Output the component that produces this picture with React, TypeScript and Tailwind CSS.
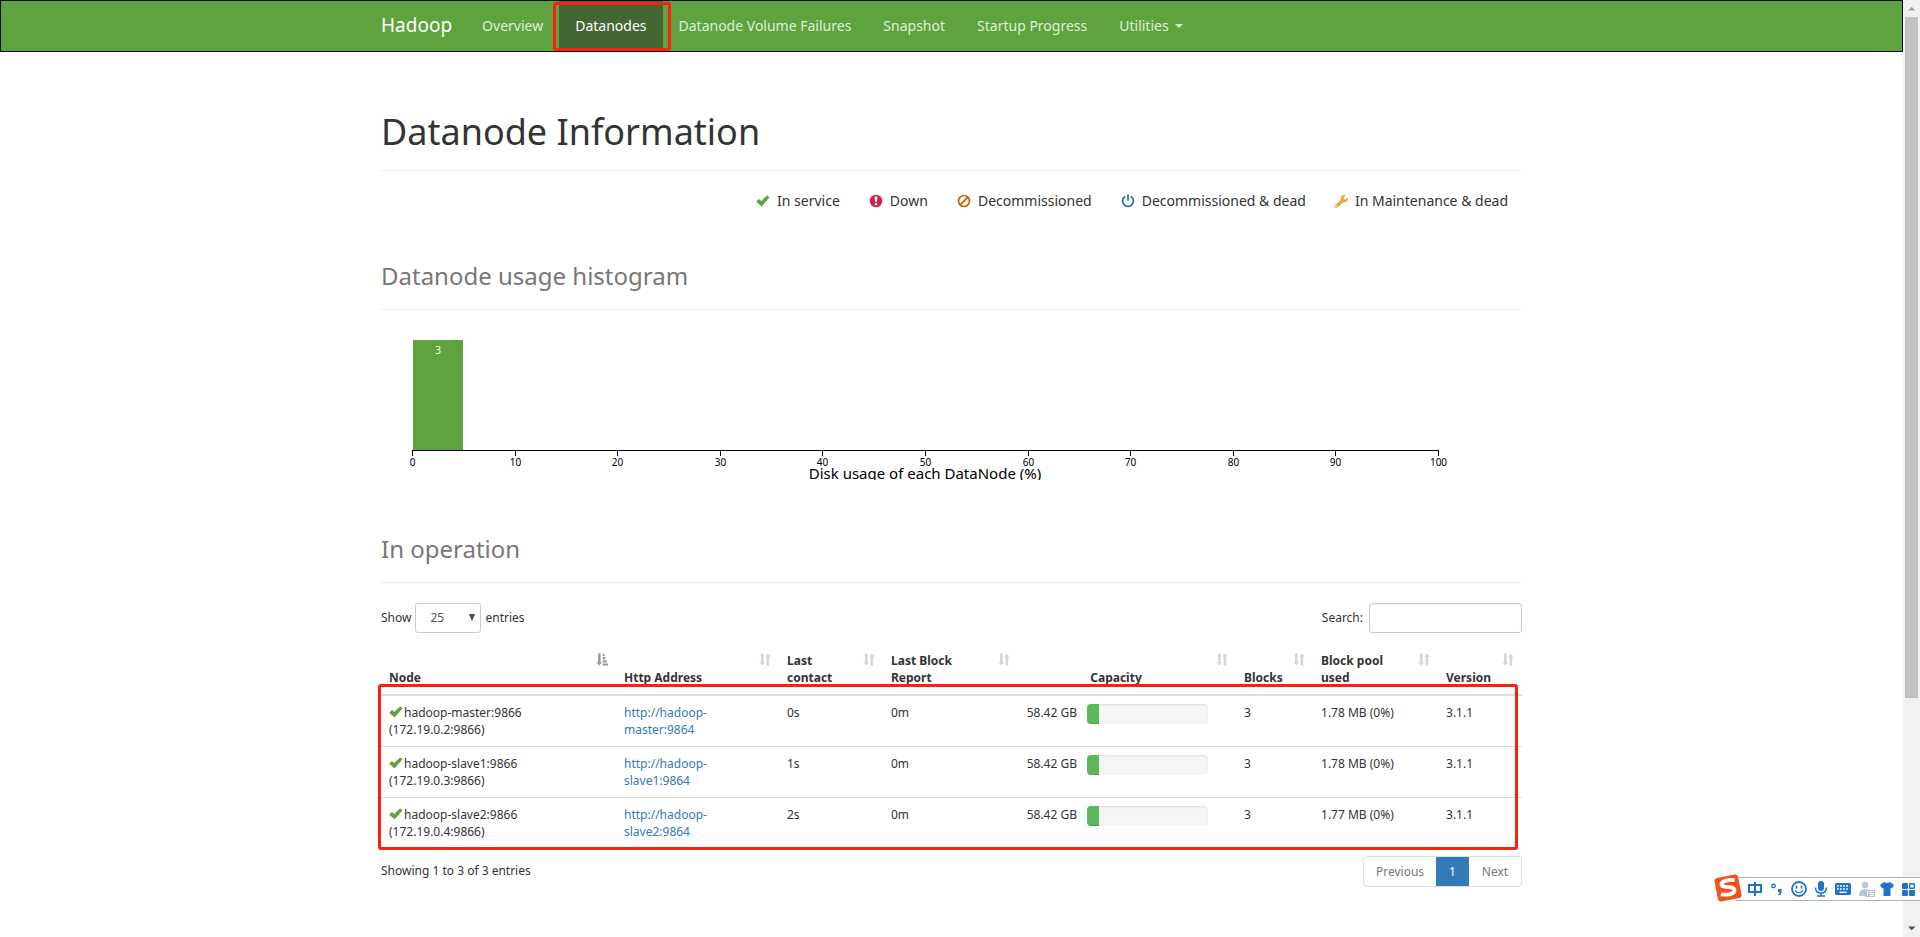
import type { ReactNode } from "react";
import { FaWrench } from "react-icons/fa";

type IconProps = { className?: string };

const CheckIcon = ({ className }: IconProps) => (
  <svg viewBox="0 0 14 12" width="14" height="12" className={className} fill="currentColor" aria-hidden="true">
    <path d="M0.4 6.4 2.7 4.3Q3 4.1 3.4 4.3L5.3 5.9 10.8 0.8Q11.1 0.5 11.5 0.7L13.2 2.1Q13.5 2.4 13.2 2.8L6 10.9Q5.6 11.3 5.1 11L0.5 7.1Q0.1 6.8 0.4 6.4Z" />
  </svg>
);

const DownIcon = ({ className }: IconProps) => (
  <svg viewBox="0 0 14 14" width="14" height="14" className={className} aria-hidden="true">
    <circle cx="7" cy="7" r="6.3" fill="currentColor" />
    <path d="M5.6 2.6h2.8L7.9 7.8H6.1zM5.9 9.2h2.2v2H5.9z" fill="#fff" />
  </svg>
);

const BanIcon = ({ className }: IconProps) => (
  <svg viewBox="0 0 14 14" width="14" height="14" className={className} fill="none" stroke="currentColor" strokeWidth="1.7" aria-hidden="true">
    <circle cx="7" cy="7" r="5.5" />
    <path d="M3.2 10.8 10.8 3.2" />
  </svg>
);

const PowerIcon = ({ className }: IconProps) => (
  <svg viewBox="0 0 14 14" width="14" height="14" className={className} fill="none" stroke="currentColor" strokeWidth="1.7" aria-hidden="true">
    <path d="M4.2 2.4A5.4 5.4 0 1 0 9.8 2.4" />
    <path d="M7 0.4V6.6" />
  </svg>
);

const SortIcon = ({ className }: IconProps) => (
  <svg viewBox="0 0 12 13" width="12" height="13" className={className} fill="currentColor" aria-hidden="true">
    <path d="M2 0.5H4.6V9.2H6L3.3 12.5 0.4 9.2H2zM7.6 12.5H10.2V3.8H11.8L8.9 0.5 6.2 3.8H7.6z" />
  </svg>
);

const SortAscIcon = ({ className }: IconProps) => (
  <svg viewBox="0 0 12 13" width="12" height="13" className={className} fill="currentColor" aria-hidden="true">
    <path d="M2 0.5H4.6V9.2H6L3.3 12.5 0.4 9.2H2zM6.6 0.8h2v2.200h-2zM6.6 4h3v2.200h-3zM6.6 7.2h4.200v2.200h-4.200zM6.6 10.4H12v2.100H6.6z" />
  </svg>
);

const navItems = [
  { label: "Overview", active: false },
  { label: "Datanodes", active: true },
  { label: "Datanode Volume Failures", active: false },
  { label: "Snapshot", active: false },
  { label: "Startup Progress", active: false },
];

const legend: { label: string; icon: ReactNode }[] = [
  { label: "In service", icon: <CheckIcon className="text-[#5fa33e]" /> },
  { label: "Down", icon: <DownIcon className="text-[#c7254e]" /> },
  { label: "Decommissioned", icon: <BanIcon className="text-[#bc5f04]" /> },
  { label: "Decommissioned & dead", icon: <PowerIcon className="text-[#2e6da4]" /> },
  { label: "In Maintenance & dead", icon: <FaWrench size={13} className="text-[#eea236]" /> },
];

const nodes = [
  { host: "hadoop-master", ip: "172.19.0.2", contact: "0s", report: "0m", capacity: "58.42 GB", used: 10, blocks: 3, pool: "1.78 MB (0%)", version: "3.1.1" },
  { host: "hadoop-slave1", ip: "172.19.0.3", contact: "1s", report: "0m", capacity: "58.42 GB", used: 10, blocks: 3, pool: "1.78 MB (0%)", version: "3.1.1" },
  { host: "hadoop-slave2", ip: "172.19.0.4", contact: "2s", report: "0m", capacity: "58.42 GB", used: 10, blocks: 3, pool: "1.77 MB (0%)", version: "3.1.1" },
];

const columns = [
  { label: "Node", span: 1, sorted: true },
  { label: "Http Address", span: 1, sorted: false },
  { label: "Last contact", span: 1, sorted: false },
  { label: "Last Block Report", span: 1, sorted: false },
  { label: "Capacity", span: 2, sorted: false },
  { label: "Blocks", span: 1, sorted: false },
  { label: "Block pool used", span: 1, sorted: false },
  { label: "Version", span: 1, sorted: false },
];

function Navbar() {
  return (
    <nav className="border border-[#080808] bg-[#5fa33e]">
      <div className="mx-auto flex h-[50px] max-w-[1171px] items-stretch px-[15px] text-sm text-[#dff0d8]">
        <a href="#top" className="flex items-center pr-3.5 pb-px text-[19px] text-white">
          Hadoop
        </a>
        <ul className="flex">
          {navItems.map((item) => (
            <li key={item.label} className="relative flex">
              <a
                href="#top"
                className={item.active ? "flex items-center bg-[#446633] px-4 pb-px text-white" : "flex items-center px-4 pb-px"}
              >
                {item.label}
              </a>
              {item.active && (
                <span className="pointer-events-none absolute top-px -right-[8px] bottom-0 -left-[6px] rounded-[3px] border-[3px] border-[#ff1e10]" />
              )}
            </li>
          ))}
          <li className="flex">
            <button type="button" className="flex items-center gap-1.5 px-4 pb-px">
              Utilities
              <span className="border-x-4 border-t-4 border-x-transparent border-t-[#dff0d8]" />
            </button>
          </li>
        </ul>
      </div>
    </nav>
  );
}

function Histogram() {
  const ticks = [0, 10, 20, 30, 40, 50, 60, 70, 80, 90, 100];
  return (
    <svg viewBox="0 0 1141 150" className="mt-5 block w-full overflow-hidden" role="img" aria-label="Disk usage of each DataNode (%)">
      <rect x="32" y="10" width="50" height="110" fill="#5fa33e" />
      <text x="57" y="24" fontSize="10" fill="#fff" textAnchor="middle">
        3
      </text>
      <path d="M31 120.5H1058" stroke="#000" />
      {ticks.map((t) => {
        const x = Math.round(31 + t * 10.26) + 0.5;
        return (
          <g key={t}>
            <path d={`M${x} 120V126`} stroke="#000" />
            <text x={x} y="136" fontSize="10" textAnchor="middle">
              {t}
            </text>
          </g>
        );
      })}
      <text x="544" y="149" fontSize="15" textAnchor="middle">
        Disk usage of each DataNode (%)
      </text>
    </svg>
  );
}

function SectionTitle({ children }: { children: ReactNode }) {
  return <h2 className="border-b border-[#eeeeee] pb-[17px] text-2xl leading-8 text-[#777777]">{children}</h2>;
}

function NodeTable() {
  return (
    <div className="relative">
      <table className="w-full table-fixed border-collapse text-xs leading-[17px]">
        <colgroup>
          <col className="w-[235px]" />
          <col className="w-[163px]" />
          <col className="w-[104px]" />
          <col className="w-[135px]" />
          <col className="w-[61px]" />
          <col className="w-[157px]" />
          <col className="w-[77px]" />
          <col className="w-[125px]" />
          <col />
        </colgroup>
        <thead>
          <tr className="border-b-2 border-[#dddddd]">
            {columns.map((c) => (
              <th
                key={c.label}
                colSpan={c.span}
                scope="col"
                className={c.span === 2 ? "relative p-2 pr-[30px] text-center align-bottom" : "relative p-2 pr-[30px] text-left align-bottom"}
              >
                {c.label}
                {c.sorted ? (
                  <SortAscIcon className="absolute top-[9px] right-2 text-[#999999]" />
                ) : (
                  <SortIcon className="absolute top-[9px] right-2 text-[#d6d6d6]" />
                )}
              </th>
            ))}
          </tr>
        </thead>
        <tbody>
          {nodes.map((n) => (
            <tr key={n.host} className="border-t border-[#dddddd] align-top">
              <td className="p-2">
                <div>
                  <CheckIcon className="mr-px inline-block align-[-1px] text-[#5fa33e]" />
                  {`${n.host}:9866`}
                </div>
                <div>{`(${n.ip}:9866)`}</div>
              </td>
              <td className="py-2 pr-10 pl-2">
                <a href="#top" className="text-[#337ab7]">
                  {`http://${n.host}:9864`}
                </a>
              </td>
              <td className="p-2">{n.contact}</td>
              <td className="p-2">{n.report}</td>
              <td className="py-2 pr-0.5 text-right whitespace-nowrap">{n.capacity}</td>
              <td className="py-2 pr-7 pl-2">
                <div className="h-5 overflow-hidden rounded bg-[#f5f5f5] shadow-[inset_0_1px_2px_rgba(0,0,0,0.1)]">
                  <div className="h-full bg-[#5cb85c] shadow-[inset_0_-1px_0_rgba(0,0,0,0.15)]" style={{ width: `${n.used}%` }} />
                </div>
              </td>
              <td className="p-2">{n.blocks}</td>
              <td className="p-2">{n.pool}</td>
              <td className="p-2">{n.version}</td>
            </tr>
          ))}
        </tbody>
      </table>
      <div className="pointer-events-none absolute top-[40px] right-[4px] -bottom-[2px] -left-[3px] rounded-[3px] border-[3px] border-[#ff1e10]" />
    </div>
  );
}

function InputToolbar() {
  return (
    <div className="fixed right-0 bottom-[36px] flex h-6 w-[184px] items-center border-y border-[#b0b0b8] bg-white pl-3 text-[#2074c8]">
      <svg viewBox="0 0 28 28" width="28" height="28" className="absolute -top-[4px] -left-[22px]" aria-hidden="true">
        <g transform="rotate(-11 14 14)">
          <rect x="2" y="2" width="24" height="24" rx="3" fill="#f4511e" />
          <path d="M22 7.500C16 5.500 8 6 8.200 9.900 8.400 13.800 20.200 12.200 20 16.900 19.800 21.400 11.500 21 5.800 18.800" fill="none" stroke="#fff" strokeWidth="3.800" />
        </g>
      </svg>
      <svg viewBox="0 0 172 22" width="172" height="22" fill="none" stroke="currentColor" aria-hidden="true">
        <path d="M1 7H13V14H1zM7 4V18" strokeWidth="2" />
        <circle cx="25.500" cy="8" r="1.700" strokeWidth="1.400" />
        <path d="M30 11h3.500v3q0 2.500-3 3.500v-1.500q1.200-.8 1.200-1.800H30z" fill="currentColor" stroke="none" />
        <circle cx="51" cy="11" r="7" strokeWidth="1.800" />
        <path d="M48.500 7.500v3M53.500 7.500v3" strokeWidth="1.600" />
        <path d="M47 12.500q4 4.500 8 0" strokeWidth="1.200" />
        <rect x="70" y="3" width="6" height="10" rx="3" fill="currentColor" stroke="none" />
        <path d="M67.500 9.500q0 5.500 5.500 5.500t5.500-5.500M73 15v3M69 18h8" strokeWidth="1.600" />
        <rect x="87" y="5" width="16" height="12" rx="1.500" fill="currentColor" stroke="none" />
        <path d="M89 8h12M89 11h12" stroke="#fff" strokeWidth="1.500" strokeDasharray="1.800 1.200" />
        <path d="M91.500 14.300h7" stroke="#fff" strokeWidth="1.400" />
        <g fill="#b9c4d8" stroke="none">
          <circle cx="117" cy="7" r="3.200" />
          <path d="M111 18q0-7 6-7 3 0 4 1.500h-3V18z" />
          <rect x="117" y="12" width="10" height="7" />
        </g>
        <path d="M119.500 13v5M125.500 13.500h-3.500v2h3.200v2H122" stroke="#fff" strokeWidth="1" />
        <path d="M132 7l4-3q3 2 6 0l4 3-2 3.500-1.500-.8V18h-7V9.700l-1.500.8z" fill="currentColor" stroke="none" />
        <rect x="154" y="5" width="6" height="6" rx="1" fill="currentColor" stroke="none" />
        <rect x="154" y="12" width="6" height="6" rx="1" fill="currentColor" stroke="none" />
        <rect x="161" y="12" width="6" height="6" rx="1" fill="currentColor" stroke="none" />
        <rect x="161.700" y="5.700" width="4.600" height="4.600" rx="0.500" strokeWidth="1.400" />
      </svg>
    </div>
  );
}

function ScrollRail() {
  return (
    <div className="fixed inset-y-0 right-0 flex w-[17px] flex-col items-center justify-between bg-[#f1f1f1]" aria-hidden="true">
      <svg viewBox="0 0 17 17" width="17" height="17" className="shrink-0">
        <path d="M5 10.500h7.500L8.700 6.700z" fill="#a3a3a3" />
      </svg>
      <div className="mb-auto h-[681px] max-h-[73%] w-[13px] bg-[#c1c1c1]" />
      <svg viewBox="0 0 17 17" width="17" height="17" className="shrink-0">
        <path d="M5 6.500h7.500L8.700 10.300z" fill="#505050" />
      </svg>
    </div>
  );
}

export default function App() {
  return (
    <div id="top" className="min-h-screen bg-white pr-[17px] font-['Noto_Sans','Open_Sans',sans-serif] text-[#333333]">
      <Navbar />
      <main className="mx-auto max-w-[1171px] px-[15px] pt-[58px]">
        <h1 className="border-b border-[#eeeeee] pb-4 text-4xl leading-[44px]">Datanode Information</h1>
        <ul className="mt-[18px] flex justify-end gap-[29px] pr-[14px] text-sm leading-6">
          {legend.map((l) => (
            <li key={l.label} className="flex items-center gap-[7px]">
              {l.icon}
              {l.label}
            </li>
          ))}
        </ul>
        <section className="mt-[47px]">
          <SectionTitle>Datanode usage histogram</SectionTitle>
          <Histogram />
        </section>
        <section className="mt-[53px]">
          <SectionTitle>In operation</SectionTitle>
          <div className="mt-5 flex items-center justify-between text-xs">
            <label className="flex items-center gap-1">
              Show
              <span className="relative">
                <select className="h-[30px] w-[66px] appearance-none rounded-[3px] border border-[#cccccc] bg-white pl-[14px] text-[#555555]" defaultValue="25">
                  <option>25</option>
                  <option>50</option>
                  <option>100</option>
                </select>
                <span className="pointer-events-none absolute top-[11px] right-[6px] border-x-[3px] border-t-[7px] border-x-transparent border-t-[#444444]" />
              </span>
              entries
            </label>
            <label className="flex items-center gap-1.5">
              Search:
              <input type="search" className="h-[30px] w-[153px] rounded-[3px] border border-[#cccccc] bg-white px-2.5 shadow-[inset_0_1px_1px_rgba(0,0,0,0.075)]" />
            </label>
          </div>
          <div className="mt-[11px]">
            <NodeTable />
          </div>
          <div className="mt-2 flex items-start justify-between text-xs">
            <p className="pt-[7px]">Showing 1 to 3 of 3 entries</p>
            <div className="flex h-[31px] overflow-hidden rounded border border-[#dddddd] text-[#777777]">
              <button type="button" className="w-[72px]">Previous</button>
              <button type="button" className="-my-px w-[33px] bg-[#337ab7] text-white">1</button>
              <button type="button" className="w-[52px]">Next</button>
            </div>
          </div>
        </section>
      </main>
      <ScrollRail />
      <InputToolbar />
    </div>
  );
}
